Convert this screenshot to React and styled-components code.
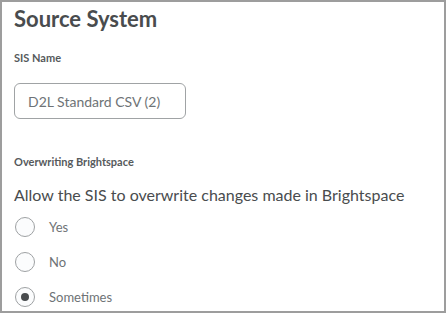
import React, { useState } from 'react';
import styled, { createGlobalStyle } from 'styled-components';

const GlobalStyle = createGlobalStyle`
  html, body {
    margin: 0;
    padding: 0;
    background: #ffffff;
  }
  body {
    font-family: Lato, 'Noto Sans', sans-serif;
  }
`;

const Panel = styled.div`
  box-sizing: border-box;
  width: 446px;
  height: 313px;
  border: 2px solid #9d9d9d;
  padding: 2px 12px 0 12px;
  color: #494c4e;
  overflow: hidden;
`;

const Title = styled.h2`
  margin: 0;
  font-size: 22px;
  line-height: 30px;
  font-weight: 700;
  color: #494c4e;
`;

const Label = styled.div`
  font-size: 11px;
  font-weight: 700;
  line-height: 14px;
  color: #565a5c;
  margin-top: ${(p) => p.$top}px;
`;

const TextBox = styled.div`
  box-sizing: border-box;
  margin-top: 18px;
  width: 172px;
  height: 36px;
  border: 1px solid #a0a3a5;
  border-radius: 6px;
  padding: 0 13px;
  display: flex;
  align-items: center;
  font-size: 14px;
  color: #6e7376;
`;

const Question = styled.div`
  margin-top: 15px;
  font-size: 16px;
  line-height: 22px;
  color: #494c4e;
`;

const RadioList = styled.div`
  display: flex;
  flex-direction: column;
  gap: 15px;
  margin-top: 11px;
`;

const RadioRow = styled.label`
  display: flex;
  align-items: center;
  gap: 14px;
  height: 20px;
  font-size: 13px;
  color: #6e7376;
  cursor: pointer;
`;

const Circle = styled.span`
  box-sizing: border-box;
  width: 20px;
  height: 20px;
  margin-left: 1px;
  border-radius: 50%;
  border: 1px solid #9ea1a3;
  background: #fbfcfd;
  display: flex;
  align-items: center;
  justify-content: center;

  &::after {
    content: '';
    width: 8px;
    height: 8px;
    border-radius: 50%;
    background: #494c4e;
    display: ${(p) => (p.$checked ? 'block' : 'none')};
  }
`;

const options = ['Yes', 'No', 'Sometimes'];

export default function App() {
  const [choice, setChoice] = useState('Sometimes');

  return (
    <>
      <GlobalStyle />
      <Panel>
        <Title>Source System</Title>
        <Label $top={17}>SIS Name</Label>
        <TextBox>D2L Standard CSV (2)</TextBox>
        <Label $top={36}>Overwriting Brightspace</Label>
        <Question>Allow the SIS to overwrite changes made in Brightspace</Question>
        <RadioList>
          {options.map((opt) => (
            <RadioRow key={opt} onClick={() => setChoice(opt)}>
              <Circle $checked={choice === opt} />
              {opt}
            </RadioRow>
          ))}
        </RadioList>
      </Panel>
    </>
  );
}
